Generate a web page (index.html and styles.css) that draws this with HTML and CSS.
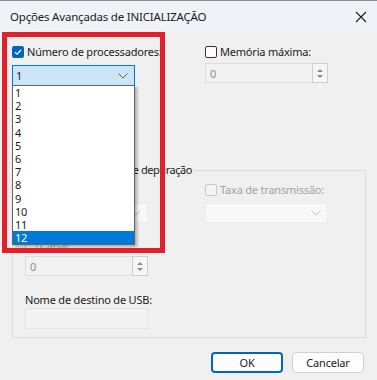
FILE: index.html
```html
<!DOCTYPE html>
<html lang="pt">
<head>
  <meta charset="UTF-8">
  <title>Opções Avançadas de INICIALIZAÇÃO</title>
  <link rel="stylesheet" href="styles.css">
</head>
<body>
  <div class="dialog">
    <div class="titlebar">
      <span class="title">Opções Avançadas de INICIALIZAÇÃO</span>
      <svg class="close" width="12" height="12" viewBox="0 0 12 12"><path d="M1 1L11 11M11 1L1 11" stroke="#1b1b1b" stroke-width="1.1" fill="none"/></svg>
    </div>

    <div class="content">
      <div class="top">
        <div class="col">
          <label class="check"><span class="box checked"><svg width="10" height="10" viewBox="0 0 10 10"><path d="M2 5.2L4.1 7.2L8.2 2.8" stroke="#fff" stroke-width="1.3" fill="none"/></svg></span>Número de processadores:</label>
          <div class="combo focus"><span>1</span><svg width="10" height="6" viewBox="0 0 10 6"><path d="M0.5 0.5L5 5L9.5 0.5" stroke="#606060" fill="none"/></svg></div>
        </div>
        <div class="col">
          <label class="check"><span class="box"></span>Memória máxima:</label>
          <div class="spin"><span>0</span><div class="arrows"><i class="up"></i><i class="down"></i></div></div>
        </div>
      </div>

      <div class="group">
        <span class="group-title">Configurações globais de depuração</span>
        <div class="grid">
          <div class="col">
            <div class="lbl">Porta de depuração:</div>
            <div class="combo off"><span></span><svg width="10" height="6" viewBox="0 0 10 6"><path d="M0.5 0.5L5 5L9.5 0.5" stroke="#c4c4c4" fill="none"/></svg></div>
            <label class="check off canal"><span class="box"></span>Canal:</label>
            <div class="spin low"><span>0</span><div class="arrows"><i class="up"></i><i class="down"></i></div></div>
            <div class="lbl usb">Nome de destino de USB:</div>
            <div class="textbox"></div>
          </div>
          <div class="col">
            <label class="check off"><span class="box"></span>Taxa de transmissão:</label>
            <div class="combo off"><span></span><svg width="10" height="6" viewBox="0 0 10 6"><path d="M0.5 0.5L5 5L9.5 0.5" stroke="#c4c4c4" fill="none"/></svg></div>
          </div>
        </div>
      </div>
    </div>

    <div class="buttons">
      <button class="btn default">OK</button>
      <button class="btn">Cancelar</button>
    </div>

    <ul class="dropdown">
      <li>1</li><li>2</li><li>3</li><li>4</li><li>5</li><li>6</li>
      <li>7</li><li>8</li><li>9</li><li>10</li><li>11</li><li class="sel">12</li>
    </ul>
    <div class="mark"></div>
  </div>
</body>
</html>
```

FILE: styles.css
```css
* {
  box-sizing: border-box;
}
body {
  margin: 0;
  background: #f0f0f0;
  font-family: "Noto Sans", sans-serif;
  font-size: 11px;
  letter-spacing: -0.2px;
  color: #1b1b1b;
}
.dialog {
  position: relative;
  width: 377px;
  height: 380px;
  display: flex;
  flex-direction: column;
  overflow: hidden;
  white-space: nowrap;
}
.titlebar {
  height: 32px;
  background: #eff3f8;
  border-top: 1px solid #8a8f96;
  display: flex;
  align-items: center;
  justify-content: space-between;
  padding: 0 10px 0 10px;
}
.title {
  font-size: 11.5px;
}
.content {
  padding: 13px 11px 0 12px;
}
.top {
  display: grid;
  grid-template-columns: 193px 123px;
  height: 118px;
}
.check {
  display: flex;
  align-items: center;
  gap: 3px;
  height: 14px;
  line-height: 14px;
}
.box {
  width: 12px;
  height: 12px;
  flex: none;
  border: 1px solid #333;
  border-radius: 2px;
  background: #fbfbfb;
  display: flex;
  align-items: center;
  justify-content: center;
}
.box.checked {
  background: #0067c0;
  border-color: #0067c0;
}
.check.off {
  color: #a2a2a2;
}
.check.off .box {
  border-color: #c8c8c8;
  background: #f4f4f4;
}
.combo {
  margin-top: 6px;
  height: 21px;
  width: 123px;
  border: 1px solid #d0d0d0;
  background: #fdfdfd;
  display: flex;
  align-items: center;
  justify-content: space-between;
  padding: 0 6px 0 3px;
}
.combo.focus {
  background: #cce4f7;
  border-color: #0078d7;
}
.combo.off {
  background: #f8f8f8;
  border-color: #ececec;
  margin-top: 6px;
  height: 20px;
}
.spin {
  margin-top: 4px;
  height: 20px;
  width: 123px;
  border: 1px solid #dedede;
  border-right: none;
  background: #f2f2f2;
  display: flex;
  align-items: center;
  justify-content: space-between;
  padding-left: 4px;
  color: #8c8c8c;
}
.spin.low {
  margin-top: 3px;
}
.arrows {
  width: 16px;
  height: 20px;
  border: 1px solid #cfcfcf;
  background: #f6f6f6;
  display: flex;
  flex-direction: column;
  align-items: center;
  justify-content: space-around;
  padding: 3px 0;
}
.arrows i {
  width: 0;
  height: 0;
  border-left: 3px solid transparent;
  border-right: 3px solid transparent;
}
.arrows .up {
  border-bottom: 3px solid #8c8c8c;
}
.arrows .down {
  border-top: 3px solid #8c8c8c;
}
.group {
  position: relative;
  margin-top: 7px;
  height: 168px;
  border: 1px solid #dcdcdc;
  padding: 12px 0 0 12px;
}
.group-title {
  position: absolute;
  top: -8px;
  right: 171px;
  padding: 0 2px;
  line-height: 14px;
  letter-spacing: -0.45px;
  background: #f0f0f0;
}
.grid {
  display: grid;
  grid-template-columns: 123px 123px;
  column-gap: 57px;
}
.lbl {
  height: 14px;
  line-height: 14px;
}
.canal {
  margin-top: 16px;
}
.usb {
  margin-top: 17px;
}
.textbox {
  margin-top: 1px;
  height: 21px;
  width: 123px;
  border: 1px solid #e4e4e4;
  background: #f3f3f3;
}
.buttons {
  display: flex;
  justify-content: flex-end;
  gap: 9px;
  padding: 14px 13px 0 0;
}
.btn {
  width: 72px;
  height: 21px;
  border: 1px solid #d0d0d0;
  border-radius: 4px;
  background: #fdfdfd;
  font-family: "Noto Sans", sans-serif;
  font-size: 11px;
  letter-spacing: -0.2px;
  color: #1b1b1b;
  padding: 0;
}
.btn.default {
  border: 2px solid #0067c0;
}
.dropdown {
  position: absolute;
  left: 12px;
  top: 85px;
  width: 123px;
  margin: 0;
  padding: 0;
  list-style: none;
  background: #fff;
  border: 1px solid #646464;
  box-shadow: 2px 2px 3px rgba(0, 0, 0, 0.3);
}
.dropdown li {
  height: 13.2px;
  line-height: 13.2px;
  padding-left: 2px;
}
.dropdown li.sel {
  background: #0078d7;
  color: #fff;
}
.mark {
  position: absolute;
  left: 2px;
  top: 32px;
  width: 163px;
  height: 221px;
  border: 5px solid #e0202a;
}
```
